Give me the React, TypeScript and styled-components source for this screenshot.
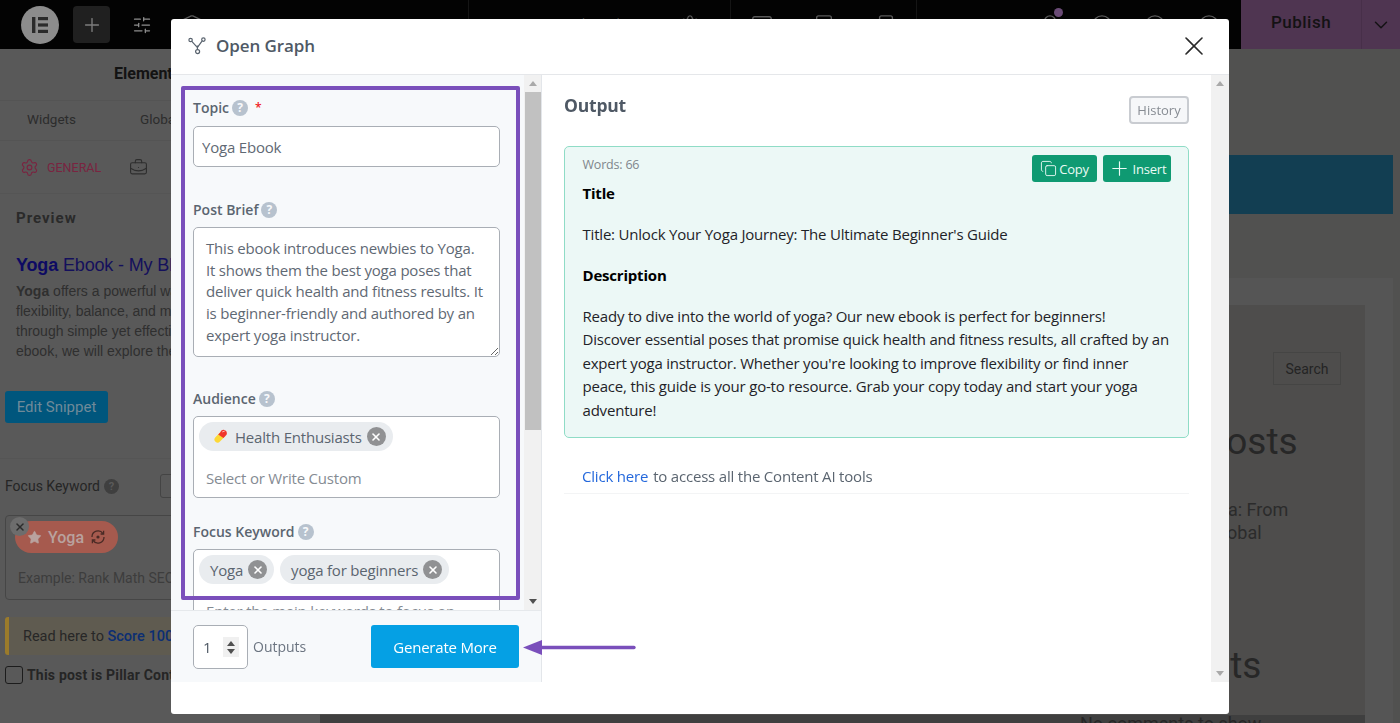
import React from 'react';
import styled, { createGlobalStyle } from 'styled-components';
import {
  Bell,
  BriefcaseBusiness,
  ChevronDown,
  CircleHelp,
  Copy,
  Layers,
  Monitor,
  Plus,
  Settings,
  SlidersHorizontal,
  Smartphone,
  Star,
  Tablet,
  X,
} from 'lucide-react';

const modalFont = '"Open Sans", "Noto Sans", sans-serif';
const editorFont = 'Roboto, "Liberation Sans", sans-serif';

const GlobalStyle = createGlobalStyle`
  html, body {
    margin: 0;
    padding: 0;
    height: 100%;
    overflow: hidden;
    background: #515151;
  }
  * {
    box-sizing: border-box;
  }
`;

const Editor = styled.div`
  width: 1400px;
  height: 723px;
  overflow: hidden;
  font-family: ${editorFont};
`;

const TopBar = styled.header`
  height: 49px;
  background: #030303;
  display: flex;
  align-items: center;
  color: #5a5a5a;
`;

const Logo = styled.div`
  width: 38px;
  height: 38px;
  margin-left: 21px;
  margin-right: 14px;
  border-radius: 50%;
  background: #8c8c8c;
  display: flex;
  align-items: center;
  justify-content: center;
  flex: none;
`;

const AddButton = styled.div`
  width: 37px;
  height: 37px;
  border-radius: 4px;
  background: #202020;
  color: #7c7c7c;
  display: flex;
  align-items: center;
  justify-content: center;
  flex: none;
`;

const Slot = styled.div<{ $w: number; $divided?: boolean; $light?: boolean }>`
  width: ${(p) => p.$w}px;
  height: 49px;
  flex: none;
  position: relative;
  display: flex;
  align-items: center;
  justify-content: center;
  color: ${(p) => (p.$light ? '#8f8f8f' : '#5a5a5a')};
  font-size: 15px;
  border-right: ${(p) => (p.$divided ? '1px solid #151515' : '0')};
`;

const NoticeDot = styled.span`
  position: absolute;
  top: 8px;
  left: 31px;
  width: 9px;
  height: 9px;
  border-radius: 50%;
  background: #6a4b76;
`;

const Publish = styled.div`
  margin-left: 5px;
  width: 159px;
  height: 49px;
  background: #4f3551;
  color: #141214;
  display: flex;
  flex: none;
`;

const PublishLabel = styled.div`
  width: 121px;
  padding-bottom: 5px;
  display: flex;
  align-items: center;
  justify-content: center;
  font-size: 17px;
  font-weight: 500;
  letter-spacing: 0.5px;
  border-right: 1px solid #472f49;
`;

const PublishCaret = styled.div`
  flex: 1;
  display: flex;
  align-items: center;
  justify-content: center;
`;

const Workspace = styled.div`
  display: flex;
  height: 674px;
`;

const Sidebar = styled.aside`
  width: 320px;
  flex: none;
  background: #595959;
  color: #262626;
`;

const SidebarTitle = styled.div`
  height: 52px;
  padding-left: 114px;
  display: flex;
  align-items: center;
  font-size: 16px;
  font-weight: 700;
  color: #131313;
  border-bottom: 1px solid #545454;
  padding-bottom: 2px;
`;

const SidebarTabs = styled.div`
  height: 40px;
  display: flex;
  align-items: center;
  gap: 64px;
  padding-left: 27px;
  padding-bottom: 3px;
  font-size: 13.5px;
  color: #2c2c2c;
  border-bottom: 1px solid #545454;
`;

const SectionTabs = styled.div`
  height: 53px;
  padding-left: 20px;
  display: flex;
  align-items: center;
  color: #7a2440;
  font-size: 12.5px;
  border-bottom: 1px solid #555;
`;

const SectionLabel = styled.span`
  margin-left: 8px;
  margin-right: 28px;
`;

const SidebarContent = styled.div`
  padding: 0 5px;
`;

const PreviewHeading = styled.div`
  margin: 14px 0 0 11px;
  font-size: 15px;
  line-height: 20px;
  font-weight: 700;
  letter-spacing: 1px;
  color: #2a2a2a;
`;

const SnippetTitle = styled.div`
  margin: 26px 0 0 11px;
  font-family: 'Liberation Sans', sans-serif;
  font-size: 18px;
  line-height: 22px;
  letter-spacing: -0.15px;
  white-space: nowrap;
  color: #14105c;
  b {
    color: #0d0a63;
  }
`;

const SnippetText = styled.div`
  margin: 5px 0 0 11px;
  font-family: 'Liberation Sans', sans-serif;
  font-size: 14px;
  line-height: 20px;
  white-space: nowrap;
  color: #2f2f2f;
`;

const EditSnippet = styled.div`
  margin-top: 30px;
  width: 103px;
  height: 32px;
  border-radius: 3px;
  background: #00567d;
  color: #6f8a99;
  display: flex;
  align-items: center;
  justify-content: center;
  font-size: 15px;
`;

const SidebarRule = styled.div`
  height: 1px;
  margin: 35px -5px 0;
  background: #555;
`;

const FocusRow = styled.div`
  margin-top: 17px;
  height: 20px;
  display: flex;
  align-items: center;
  gap: 4px;
  font-size: 14px;
  white-space: nowrap;
  color: #252525;
`;

const FocusHelp = styled.span`
  width: 15px;
  height: 15px;
  border-radius: 50%;
  background: #3f3f3f;
  color: #5a5a5a;
  display: inline-flex;
  align-items: center;
  justify-content: center;
  font-size: 11px;
  font-weight: 700;
`;

const FocusSelect = styled.div`
  width: 40px;
  height: 24px;
  margin-left: 37px;
  border: 1px solid #444;
  border-radius: 3px;
`;

const KeywordBox = styled.div`
  position: relative;
  margin-top: 19px;
  height: 85px;
  width: 300px;
  border: 1px solid #464646;
  border-radius: 4px;
  padding: 5px 9px;
`;

const KeywordChip = styled.div`
  width: 103px;
  height: 32px;
  border-radius: 16px;
  background: #a65a4e;
  color: #b9a29e;
  display: flex;
  align-items: center;
  padding-left: 12px;
  gap: 6px;
  font-size: 16px;
  font-weight: 500;
`;

const ChipClose = styled.div`
  position: absolute;
  top: 1px;
  left: 4px;
  width: 19px;
  height: 19px;
  border-radius: 50%;
  background: #6d6d6d;
  color: #2c2c2c;
  display: flex;
  align-items: center;
  justify-content: center;
`;

const KeywordHint = styled.div`
  margin-top: 15px;
  padding-left: 3px;
  font-size: 14px;
  line-height: 20px;
  color: #3d3d3d;
  white-space: nowrap;
`;

const ScoreNotice = styled.div`
  margin-top: 17px;
  width: 300px;
  height: 38px;
  border-left: 4px solid #9b7b2b;
  border-radius: 3px;
  background: #5f5b50;
  display: flex;
  align-items: center;
  padding-left: 14px;
  font-size: 14.5px;
  color: #272727;
  white-space: nowrap;
  b {
    font-weight: 500;
    color: #0b2e73;
  }
`;

const PillarRow = styled.div`
  margin-top: 11px;
  display: flex;
  align-items: center;
  gap: 4px;
  font-size: 14px;
  font-weight: 700;
  letter-spacing: 0.2px;
  color: #252525;
  white-space: nowrap;
`;

const Checkbox = styled.span`
  width: 18px;
  height: 18px;
  border: 1px solid #1c1c1c;
  border-radius: 3px;
`;

const Preview = styled.main`
  flex: 1;
  background: #515150;
  padding-top: 106px;
`;

const BlueBand = styled.div`
  height: 59px;
  margin-right: 7px;
  background: #123e52;
`;

const PageShell = styled.div`
  margin: 64px 7px 0 0;
  padding: 27px 28px 0 0;
  background: #555555;
`;

const PageColumn = styled.div`
  background: #4e4d4c;
  padding: 47px 24px 0 760px;
  height: 410px;
  color: #262626;
`;

const PageFoot = styled.div`
  height: 20px;
  background: #3f3f3f;
`;

const SearchButton = styled.div`
  margin-left: auto;
  width: 68px;
  height: 33px;
  border: 1px solid #454544;
  display: flex;
  align-items: center;
  justify-content: center;
  font-size: 14px;
  color: #242424;
`;

const WidgetHeading = styled.div<{ $top: number }>`
  margin-top: ${(p) => p.$top}px;
  font-size: 37px;
  line-height: 46px;
  color: #272727;
`;

const PostLink = styled.div`
  margin-top: 33px;
  font-size: 18px;
  line-height: 23px;
  white-space: nowrap;
  color: #2b2b2b;
`;

const NoComments = styled.div`
  margin-top: 24px;
  font-size: 18px;
  line-height: 22px;
  white-space: nowrap;
`;

const Modal = styled.section`
  position: fixed;
  top: 19px;
  left: 171px;
  width: 1058px;
  height: 695px;
  background: #fff;
  border-radius: 3px;
  padding-bottom: 32px;
  display: flex;
  flex-direction: column;
  font-family: ${modalFont};
  letter-spacing: -0.2px;
  overflow: hidden;
`;

const ModalHeader = styled.div`
  height: 56px;
  flex: none;
  padding: 0 19px 2px 17px;
  display: flex;
  align-items: center;
  border-bottom: 1px solid #e5e7ea;
`;

const ModalTitle = styled.h2`
  margin: 0 0 0 10px;
  font-size: 17px;
  font-weight: 600;
  letter-spacing: -0.1px;
  color: #4f5965;
  flex: 1;
`;

const ModalBody = styled.div`
  flex: 1;
  min-height: 0;
  display: flex;
`;

const LeftPane = styled.div`
  width: 371px;
  flex: none;
  display: flex;
  flex-direction: column;
  background: #f7f9fb;
  border-right: 1px solid #e3e6ea;
`;

const FormScroll = styled.div`
  flex: 1;
  min-height: 0;
  display: flex;
  overflow: hidden;
`;

const Form = styled.div`
  flex: 1;
  padding: 22px 23px 0 22px;
`;

const Field = styled.div<{ $after: number }>`
  margin-bottom: ${(p) => p.$after}px;
`;

const FieldLabel = styled.div<{ $below?: number }>`
  height: 21px;
  margin-bottom: ${(p) => p.$below ?? 7}px;
  display: flex;
  align-items: center;
  gap: 3px;
  font-size: 14px;
  font-weight: 600;
  letter-spacing: 0;
  color: #5b6570;
`;

const HelpDot = styled.span`
  width: 16px;
  height: 16px;
  border-radius: 50%;
  background: #b7c2ce;
  color: #f7f9fb;
  display: inline-flex;
  align-items: center;
  justify-content: center;
  font-size: 12px;
  font-weight: 700;
`;

const Required = styled.span`
  color: #f01d1d;
  margin-left: 4px;
  font-size: 12px;
  font-weight: 600;
`;

const TextInput = styled.input`
  display: block;
  width: 307px;
  height: 41px;
  padding: 0 8px;
  border: 1px solid #a9aeb5;
  border-radius: 5px;
  background: #fff;
  font-family: ${modalFont};
  font-size: 15px;
  letter-spacing: -0.2px;
  color: #5f6974;
  outline: none;
`;

const TextArea = styled.textarea`
  display: block;
  width: 307px;
  height: 130px;
  padding: 10px 12px;
  border: 1px solid #a9aeb5;
  border-radius: 5px;
  background: #fff;
  font-family: ${modalFont};
  font-size: 15px;
  letter-spacing: -0.2px;
  line-height: 21.7px;
  color: #5f6974;
  white-space: pre;
  overflow: hidden;
  resize: vertical;
  outline: none;
`;

const TagBox = styled.div<{ $grow?: boolean }>`
  width: 307px;
  height: ${(p) => (p.$grow ? '110px' : '82px')};
  padding: 5px 5px;
  border: 1px solid #a9aeb5;
  border-radius: 5px;
  background: #fff;
`;

const TagRow = styled.div`
  display: flex;
  gap: 6px;
`;

const Tag = styled.span`
  height: 29px;
  padding: 0 7px 0 11px;
  border-radius: 15px;
  background: #e9ecef;
  display: inline-flex;
  align-items: center;
  gap: 5px;
  font-size: 15px;
  color: #5b6570;
  white-space: nowrap;
`;

const TagIcon = styled.svg`
  margin: 0 2px 0 2px;
`;

const TagRemove = styled.span`
  width: 19px;
  height: 19px;
  border-radius: 50%;
  background: #909193;
  color: #fff;
  display: inline-flex;
  align-items: center;
  justify-content: center;
`;

const TagHint = styled.div`
  margin-top: 17px;
  padding-left: 7px;
  font-size: 15px;
  line-height: 20px;
  white-space: nowrap;
  color: #858b93;
`;

const Scrollbar = styled.div<{ $wide?: boolean }>`
  width: ${(p) => (p.$wide ? 18 : 17)}px;
  flex: none;
  background: #f1f1f1;
  display: flex;
  flex-direction: column;
  align-items: center;
  padding: 6px 0;
`;

const ScrollArrow = styled.span<{ $down?: boolean; $dark?: boolean }>`
  width: 0;
  height: 0;
  flex: none;
  border-left: 4px solid transparent;
  border-right: 4px solid transparent;
  ${(p) => {
    const colour = p.$dark ? '#505050' : '#a9a9a9';
    return p.$down
      ? `border-top: 5px solid ${colour};`
      : `border-bottom: 5px solid ${colour};`;
  }}
`;

const ScrollThumb = styled.div`
  width: 16px;
  height: 338px;
  margin-top: 6px;
  background: #c1c1c1;
`;

const ScrollGap = styled.div`
  flex: 1;
`;

const FormFooter = styled.div`
  height: 72px;
  flex: none;
  border-top: 1px solid #e6e9ec;
  padding: 14px 22px 0 22px;
  display: flex;
  align-items: flex-start;
`;

const NumberBox = styled.div`
  width: 55px;
  height: 44px;
  border: 1px solid #a9aeb5;
  border-radius: 5px;
  background: #fff;
  padding: 0 8px 0 9px;
  display: flex;
  align-items: center;
  justify-content: space-between;
  font-size: 15px;
  color: #4f5965;
`;

const Spinner = styled.div`
  width: 16px;
  height: 20px;
  background: #f0f0f0;
  display: flex;
  flex-direction: column;
  align-items: center;
  justify-content: center;
  gap: 3px;
`;

const OutputsLabel = styled.span`
  margin-left: 5px;
  line-height: 44px;
  font-size: 14px;
  letter-spacing: 0;
  color: #6b7480;
`;

const GenerateButton = styled.button`
  margin-left: auto;
  width: 148px;
  height: 43px;
  border: 0;
  border-radius: 3px;
  background: #05a0e4;
  color: #fff;
  font-family: ${modalFont};
  font-size: 15px;
  letter-spacing: -0.2px;
`;

const RightPane = styled.div`
  flex: 1;
  min-width: 0;
  display: flex;
  background: #fff;
`;

const OutputColumn = styled.div`
  flex: 1;
  min-width: 0;
  padding: 21px 22px 0 22px;
`;

const OutputHeader = styled.div`
  height: 28px;
  margin-bottom: 22px;
  display: flex;
  justify-content: space-between;
`;

const OutputTitle = styled.h3`
  margin: -3px 0 0;
  font-size: 17.5px;
  line-height: 24px;
  font-weight: 700;
  color: #4f5965;
`;

const HistoryButton = styled.div`
  width: 60px;
  height: 28px;
  border: 2px solid #c9ccd1;
  border-radius: 4px;
  background: #f6f7f9;
  color: #878c93;
  display: flex;
  align-items: center;
  justify-content: center;
  font-size: 13px;
  letter-spacing: 0;
`;

const ResultCard = styled.div`
  position: relative;
  height: 292px;
  padding: 8px 17.5px 0;
  border: 1.5px solid #8fdcc6;
  border-radius: 5px;
  background: #ecf8f6;
`;

const ResultTools = styled.div`
  position: absolute;
  top: 8px;
  right: 17px;
  display: flex;
  gap: 6px;
`;

const ToolButton = styled.div<{ $w: number }>`
  width: ${(p) => p.$w}px;
  height: 27px;
  border-radius: 3px;
  background: #0f9a72;
  color: #eafaf5;
  display: flex;
  align-items: center;
  justify-content: center;
  gap: 2px;
  font-size: 13px;
`;

const WordCount = styled.div`
  font-size: 12.5px;
  line-height: 20px;
  color: #80868c;
`;

const ResultText = styled.p<{ $strong?: boolean; $first?: boolean }>`
  margin: ${(p) => (p.$first ? '7px' : '0')} 0 17.6px;
  font-size: 15px;
  line-height: 23.4px;
  font-weight: ${(p) => (p.$strong ? 700 : 400)};
  color: ${(p) => (p.$strong ? '#000' : '#1f2328')};
  white-space: nowrap;
`;

const ToolsLink = styled.div`
  margin-top: 20px;
  height: 36px;
  padding: 0 18px;
  display: flex;
  align-items: center;
  border-bottom: 1px solid #f3f4f5;
  font-size: 15px;
  color: #5b6570;
  a {
    color: #2468dc;
    text-decoration: none;
    margin-right: 5px;
  }
`;

const Highlight = styled.div`
  position: absolute;
  top: 67px;
  left: 10px;
  width: 339px;
  height: 514px;
  border: 4px solid #7a4fbb;
  border-radius: 2px;
  pointer-events: none;
`;

const Pointer = styled.svg`
  position: absolute;
  top: 620px;
  left: 352px;
`;

const Help = () => <HelpDot>?</HelpDot>;

const RemoveTag = () => (
  <TagRemove>
    <X size={12} strokeWidth={3.2} />
  </TagRemove>
);

const GraphIcon = () => (
  <svg width="18" height="18" viewBox="0 0 18 18" fill="none" stroke="#59636e" strokeWidth="1.2">
    <circle cx="2.6" cy="3" r="1.7" />
    <circle cx="15.4" cy="2.6" r="1.7" />
    <circle cx="9.6" cy="14.6" r="2" />
    <path d="M3.8 4.3 L8.6 9.6 M14.2 3.8 L10 9.6 M9.4 9.6 V12.6" />
    <circle cx="9.4" cy="9.6" r="0.6" />
  </svg>
);

const ElementorMark = () => (
  <svg width="20" height="20" viewBox="0 0 20 20" fill="#2b2b2b">
    <rect x="2" y="2" width="3.4" height="16" />
    <rect x="8" y="2" width="10" height="3.2" />
    <rect x="8" y="8.4" width="10" height="3.2" />
    <rect x="8" y="14.8" width="10" height="3.2" />
  </svg>
);

const PillIcon = () => (
  <TagIcon width="16" height="16" viewBox="0 0 16 16">
    <path d="M9 2.6 L13.4 7 L8 12.6 A3.1 3.1 0 0 1 3.4 8.2 Z" fill="#fdd835" />
    <path d="M8.4 3.2 A3.1 3.1 0 0 1 13.4 1.6 A3.1 3.1 0 0 1 13.6 6.8 L11.4 9 L6.2 5.4 Z" fill="#f0352b" />
    <path d="M10.6 2.8 L12.4 2.2" stroke="#ffb3ad" strokeWidth="1" strokeLinecap="round" />
  </TagIcon>
);

const PillarTargetIcon = () => (
  <svg width="16" height="16" viewBox="0 0 16 16" fill="none" stroke="#4a2a25" strokeWidth="1.3">
    <path d="M2 8 A6 6 0 0 1 13 4.6 M14 8 A6 6 0 0 1 3 11.4" />
    <path d="M13.6 1.8 V5 H10.6 M2.4 14.2 V11 H5.4" />
    <circle cx="8" cy="8" r="1.6" fill="#4a2a25" stroke="none" />
  </svg>
);

const App = (): JSX.Element => {
  const brief =
    'This ebook introduces newbies to Yoga.\nIt shows them the best yoga poses that\ndeliver quick health and fitness results. It\nis beginner-friendly and authored by an\nexpert yoga instructor.';

  return (
    <>
      <GlobalStyle />
      <Editor>
        <TopBar>
          <Logo>
            <ElementorMark />
          </Logo>
          <AddButton>
            <Plus size={22} strokeWidth={1.5} />
          </AddButton>
          <Slot $w={64} $light>
            <SlidersHorizontal size={20} strokeWidth={1.5} />
          </Slot>
          <Slot $w={36}>
            <Layers size={22} strokeWidth={1.5} />
          </Slot>
          <Slot $w={259} $divided />
          <Slot $w={181}>Yoga Ebook (Draft)</Slot>
          <Slot $w={81} $divided>
            <Settings size={22} strokeWidth={1.5} />
          </Slot>
          <Slot $w={62}>
            <Monitor size={22} strokeWidth={1.5} />
          </Slot>
          <Slot $w={62}>
            <Tablet size={22} strokeWidth={1.5} />
          </Slot>
          <Slot $w={62} $divided>
            <Smartphone size={22} strokeWidth={1.5} />
          </Slot>
          <Slot $w={106} />
          <Slot $w={54}>
            <Bell size={22} strokeWidth={1.5} />
            <NoticeDot />
          </Slot>
          <Slot $w={50}>
            <CircleHelp size={22} strokeWidth={1.5} />
          </Slot>
          <Slot $w={55}>
            <CircleHelp size={22} strokeWidth={1.5} />
          </Slot>
          <Slot $w={54}>
            <CircleHelp size={22} strokeWidth={1.5} />
          </Slot>
          <Publish>
            <PublishLabel>Publish</PublishLabel>
            <PublishCaret>
              <ChevronDown size={22} strokeWidth={1.6} />
            </PublishCaret>
          </Publish>
        </TopBar>
        <Workspace>
          <Sidebar>
            <SidebarTitle>Elementor</SidebarTitle>
            <SidebarTabs>
              <span>Widgets</span>
              <span>Globals</span>
            </SidebarTabs>
            <SectionTabs>
              <Settings size={19} strokeWidth={1.4} />
              <SectionLabel>GENERAL</SectionLabel>
              <BriefcaseBusiness size={19} strokeWidth={1.4} color="#2e2e2e" />
            </SectionTabs>
            <SidebarContent>
              <PreviewHeading>Preview</PreviewHeading>
              <SnippetTitle>
                <b>Yoga</b> Ebook - My Blog
              </SnippetTitle>
              <SnippetText>
                <b>Yoga</b> offers a powerful way to improve
                <br />
                flexibility, balance, and mental clarity
                <br />
                through simple yet effective poses. In this
                <br />
                ebook, we will explore the basics of yoga
              </SnippetText>
              <EditSnippet>Edit Snippet</EditSnippet>
              <SidebarRule />
              <FocusRow>
                Focus Keyword
                <FocusHelp>?</FocusHelp>
                <FocusSelect />
              </FocusRow>
              <KeywordBox>
                <ChipClose>
                  <X size={12} strokeWidth={3} />
                </ChipClose>
                <KeywordChip>
                  <Star size={15} fill="#b9a29e" strokeWidth={1} />
                  Yoga
                  <PillarTargetIcon />
                </KeywordChip>
                <KeywordHint>Example: Rank Math SEO</KeywordHint>
              </KeywordBox>
              <ScoreNotice>
                Read here to&nbsp;<b>Score 100/100</b>
              </ScoreNotice>
              <PillarRow>
                <Checkbox />
                This post is Pillar Content
              </PillarRow>
            </SidebarContent>
          </Sidebar>
          <Preview>
            <BlueBand />
            <PageShell>
              <PageColumn>
                <SearchButton>Search</SearchButton>
                <WidgetHeading $top={34}>Recent Posts</WidgetHeading>
                <PostLink>
                  The History of Yoga: From
                  <br />
                  Ancient Rites to Global
                </PostLink>
                <WidgetHeading $top={53}>Recent Comments</WidgetHeading>
                <NoComments>No comments to show.</NoComments>
              </PageColumn>
              <PageFoot />
            </PageShell>
          </Preview>
        </Workspace>
      </Editor>

      <Modal>
        <ModalHeader>
          <GraphIcon />
          <ModalTitle>Open Graph</ModalTitle>
          <X size={32} strokeWidth={1.2} color="#2b2b2b" />
        </ModalHeader>
        <ModalBody>
          <LeftPane>
            <FormScroll>
              <Form>
                <Field $after={32}>
                  <FieldLabel $below={8}>
                    Topic <Help />
                    <Required>*</Required>
                  </FieldLabel>
                  <TextInput readOnly value="Yoga Ebook" />
                </Field>
                <Field $after={31}>
                  <FieldLabel>
                    Post Brief <Help />
                  </FieldLabel>
                  <TextArea readOnly value={brief} />
                </Field>
                <Field $after={23}>
                  <FieldLabel>
                    Audience <Help />
                  </FieldLabel>
                  <TagBox>
                    <TagRow>
                      <Tag>
                        <PillIcon />
                        Health Enthusiasts
                        <RemoveTag />
                      </Tag>
                    </TagRow>
                    <TagHint>Select or Write Custom</TagHint>
                  </TagBox>
                </Field>
                <Field $after={0}>
                  <FieldLabel>
                    Focus Keyword <Help />
                  </FieldLabel>
                  <TagBox $grow>
                    <TagRow>
                      <Tag>
                        Yoga
                        <RemoveTag />
                      </Tag>
                      <Tag>
                        yoga for beginners
                        <RemoveTag />
                      </Tag>
                    </TagRow>
                    <TagHint>Enter the main keywords to focus on</TagHint>
                  </TagBox>
                </Field>
              </Form>
              <Scrollbar>
                <ScrollArrow />
                <ScrollThumb />
                <ScrollGap />
                <ScrollArrow $down $dark />
              </Scrollbar>
            </FormScroll>
            <FormFooter>
              <NumberBox>
                1
                <Spinner>
                  <ScrollArrow $dark />
                  <ScrollArrow $down $dark />
                </Spinner>
              </NumberBox>
              <OutputsLabel>Outputs</OutputsLabel>
              <GenerateButton>Generate More</GenerateButton>
            </FormFooter>
          </LeftPane>
          <RightPane>
            <OutputColumn>
              <OutputHeader>
                <OutputTitle>Output</OutputTitle>
                <HistoryButton>History</HistoryButton>
              </OutputHeader>
              <ResultCard>
                <ResultTools>
                  <ToolButton $w={65}>
                    <Copy size={17} strokeWidth={1.3} />
                    Copy
                  </ToolButton>
                  <ToolButton $w={68}>
                    <Plus size={23} strokeWidth={1.2} />
                    Insert
                  </ToolButton>
                </ResultTools>
                <WordCount>Words: 66</WordCount>
                <ResultText $strong $first>
                  Title
                </ResultText>
                <ResultText>Title: Unlock Your Yoga Journey: The Ultimate Beginner's Guide</ResultText>
                <ResultText $strong>Description</ResultText>
                <ResultText>
                  Ready to dive into the world of yoga? Our new ebook is perfect for beginners!
                  <br />
                  Discover essential poses that promise quick health and fitness results, all crafted by an
                  <br />
                  expert yoga instructor. Whether you're looking to improve flexibility or find inner
                  <br />
                  peace, this guide is your go-to resource. Grab your copy today and start your yoga
                  <br />
                  adventure!
                </ResultText>
              </ResultCard>
              <ToolsLink>
                <a href="#tools">Click here</a> to access all the Content AI tools
              </ToolsLink>
            </OutputColumn>
            <Scrollbar $wide>
              <ScrollArrow />
              <ScrollGap />
              <ScrollArrow $down />
            </Scrollbar>
          </RightPane>
        </ModalBody>
        <Highlight />
        <Pointer width="114" height="17" viewBox="0 0 114 17">
          <path d="M0 8.5 L19 1 V16 Z" fill="#7a4fbb" />
          <path d="M18 8.5 H111" stroke="#7a4fbb" strokeWidth="3.4" strokeLinecap="round" />
        </Pointer>
      </Modal>
    </>
  );
};

export default App;
